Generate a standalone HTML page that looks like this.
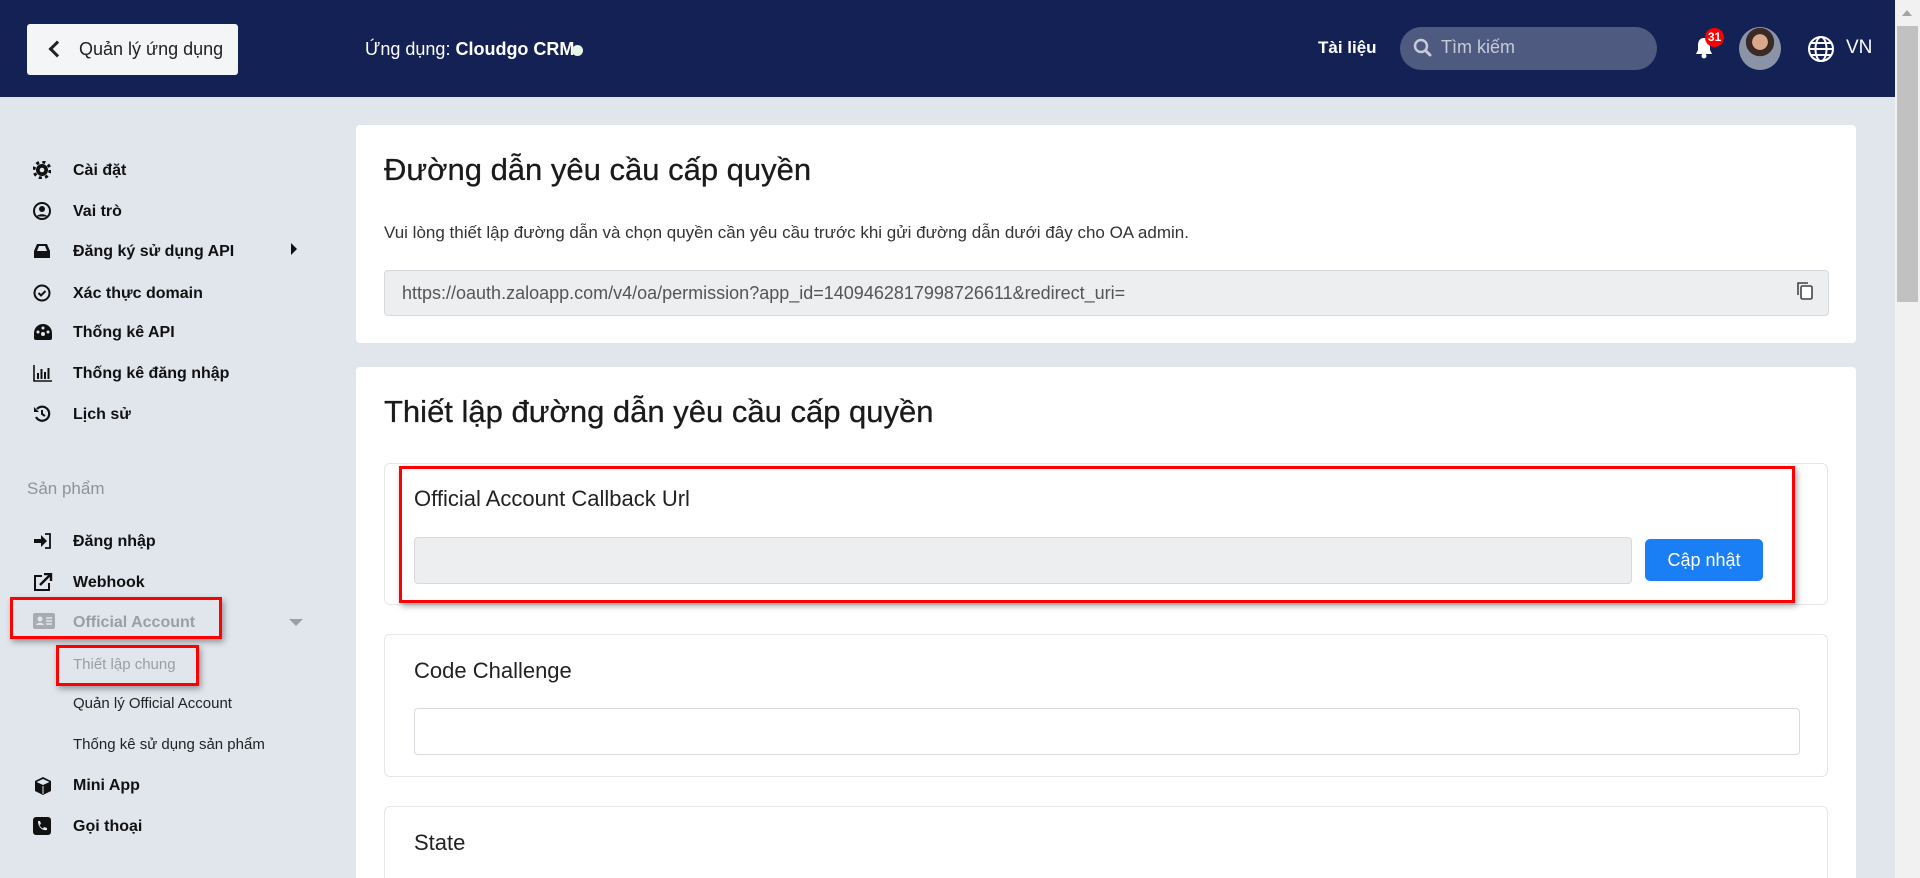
<!DOCTYPE html>
<html style="overflow:hidden;height:878px"><head><meta charset="utf-8"><style>
*{box-sizing:border-box;margin:0;padding:0}
body{width:1920px;height:878px;overflow:hidden;background:#e1e6ed;font-family:"Liberation Sans",Arial,sans-serif;color:#1a1a1a}
#w{position:relative;width:1920px;height:878px;overflow:hidden}
.abs{position:absolute}
.hdr{left:0;top:0;width:1895px;height:97px;background:#132155}
.back{left:27px;top:24px;width:211px;height:51px;background:#f4f5f7;border-radius:3px;font-size:18px;color:#222;line-height:51px;padding-left:52px}
.back:before{content:"";position:absolute;left:24px;top:19px;width:9px;height:9px;border-left:3px solid #222;border-bottom:3px solid #222;transform:rotate(45deg)}
.wt{color:#fff;font-size:17px}
.nav{left:33px;font-size:16px;font-weight:bold;color:#111}
.nav i{position:absolute;left:0;top:0;width:18px;height:18px;display:block}
.nav span{position:absolute;left:40px;top:1px;white-space:nowrap}
.sub{left:73px;font-size:15px;color:#222;white-space:nowrap}
.card{background:#fff;border-radius:4px;left:356px;width:1500px}
.box{left:384px;width:1444px;border:1px solid #e4e7eb;border-radius:6px;background:#fff}
.lbl{font-size:22px;color:#222;position:absolute;left:29px}
.red{border:3px solid #f00;box-shadow:2px 3px 6px rgba(0,0,0,.35)}
.ttl{font-size:31px;color:#1a1a1a;-webkit-text-stroke:0.3px #1a1a1a}
</style></head><body><div id="w">
<div class="abs hdr"></div>
<div class="abs back">Quản lý ứng dụng</div>
<div class="abs wt" style="left:365px;top:39px;font-size:18px">Ứng dụng: <b>Cloudgo CRM</b></div>
<div class="abs" style="left:572px;top:45px;width:11px;height:11px;border-radius:50%;background:#e8f4e8"></div>
<div class="abs wt" style="left:1318px;top:38px;font-weight:bold;font-size:17px">Tài liệu</div>
<div class="abs" style="left:1400px;top:27px;width:257px;height:43px;border-radius:22px;background:#4e5a80"></div>
<svg class="abs" style="left:1413px;top:38px" width="20" height="20" viewBox="0 0 20 20"><circle cx="8" cy="8" r="6" fill="none" stroke="#c7cbd8" stroke-width="2.5"/><path d="M12.5 12.5 L17 17" stroke="#c7cbd8" stroke-width="3" stroke-linecap="round"/></svg>
<div class="abs" style="left:1441px;top:37px;font-size:18px;color:#c7cbd8">Tìm kiếm</div>
<svg class="abs" style="left:1694px;top:36px" width="20" height="24" viewBox="0 0 20 24"><path d="M10 2c-4 0-6 3-6 7v5l-2 4h16l-2-4V9c0-4-2-7-6-7z" fill="#fff"/><circle cx="10" cy="20" r="2.5" fill="#fff"/></svg>
<div class="abs" style="left:1705px;top:28px;width:19px;height:19px;border-radius:50%;background:#f00;color:#fff;font-size:12px;font-weight:bold;text-align:center;line-height:19px">31</div>
<div class="abs" style="left:1739px;top:27px;width:42px;height:43px;border-radius:50%;background:radial-gradient(circle at 50% 35%,#d9a88c 0 22%,#3a2a25 23% 40%,#8a93a8 41%)"></div>
<svg class="abs" style="left:1807px;top:35px" width="28" height="28" viewBox="0 0 28 28" fill="none" stroke="#fff" stroke-width="2"><circle cx="14" cy="14" r="12"/><ellipse cx="14" cy="14" rx="5.5" ry="12"/><path d="M2 14h24M4 8h20M4 20h20"/></svg>
<div class="abs wt" style="left:1846px;top:37px;font-size:19px">VN</div>
<div class="abs" style="left:1895px;top:0;width:25px;height:878px;background:#f1f1f1"></div>
<div class="abs" style="left:1897px;top:26px;width:21px;height:276px;background:#c1c1c1"></div>
<div class="abs" style="left:1902px;top:10px;width:0;height:0;border-left:5px solid transparent;border-right:5px solid transparent;border-bottom:6px solid #a3a3a3"></div>

<div class="abs nav" style="top:161px"><i><svg width="18" height="18" viewBox="0 0 18 18"><circle cx="9" cy="9" r="6" fill="#111"/><circle cx="9" cy="9" r="8" fill="none" stroke="#111" stroke-width="3" stroke-dasharray="3 3.3"/><circle cx="9" cy="9" r="2.3" fill="#e1e6ed"/></svg></i><span>Cài đặt</span></div>
<div class="abs nav" style="top:202px"><i><svg width="18" height="18" viewBox="0 0 18 18"><circle cx="9" cy="9" r="8" fill="none" stroke="#111" stroke-width="2"/><circle cx="9" cy="7" r="3" fill="#111"/><path d="M3.5 14.5c2-3 9-3 11 0" fill="#111"/></svg></i><span>Vai trò</span></div>
<div class="abs nav" style="top:242px"><i><svg width="18" height="18" viewBox="0 0 18 18"><path d="M1 9l3-7h10l3 7v7H1z" fill="#111"/><path d="M4 9l2-5h6l2 5z" fill="#e1e6ed"/></svg></i><span>Đăng ký sử dụng API</span></div>
<div class="abs" style="left:291px;top:243px;width:0;height:0;border-top:6px solid transparent;border-bottom:6px solid transparent;border-left:6px solid #111"></div>
<div class="abs nav" style="top:284px"><i><svg width="18" height="18" viewBox="0 0 18 18"><circle cx="9" cy="9" r="7.5" fill="none" stroke="#111" stroke-width="2"/><path d="M5.5 9l2.5 2.5 4.5-4.5" fill="none" stroke="#111" stroke-width="2"/></svg></i><span>Xác thực domain</span></div>
<div class="abs nav" style="top:323px"><i><svg width="20" height="18" viewBox="0 0 20 18"><path d="M10 1a9 9 0 0 0-9 9v5a2 2 0 0 0 2 2h14a2 2 0 0 0 2-2v-5a9 9 0 0 0-9-9z" fill="#111"/><circle cx="10" cy="11" r="2" fill="#e1e6ed"/><circle cx="5" cy="9" r="1.5" fill="#e1e6ed"/><circle cx="15" cy="9" r="1.5" fill="#e1e6ed"/><circle cx="10" cy="5" r="1.5" fill="#e1e6ed"/></svg></i><span>Thống kê API</span></div>
<div class="abs nav" style="top:364px"><i><svg width="20" height="18" viewBox="0 0 20 18"><path d="M1 1v16h18" fill="none" stroke="#111" stroke-width="1.6"/><path d="M5 9v6M8.5 5v10M12 8v7M15.5 4v11" stroke="#111" stroke-width="2"/></svg></i><span>Thống kê đăng nhập</span></div>
<div class="abs nav" style="top:405px"><i><svg width="18" height="18" viewBox="0 0 18 18"><path d="M4 4a7 7 0 1 1-1 8" fill="none" stroke="#111" stroke-width="2.2"/><path d="M1 2v5h5z" fill="#111"/><path d="M9 5v4l3 2" fill="none" stroke="#111" stroke-width="2"/></svg></i><span>Lịch sử</span></div>
<div class="abs" style="left:27px;top:479px;font-size:17px;color:#8d939c">Sản phẩm</div>
<div class="abs nav" style="top:532px"><i><svg width="20" height="18" viewBox="0 0 20 18"><path d="M1 7h7V3l6 6-6 6v-4H1z" fill="#111"/><path d="M12 2h5v14h-5" fill="none" stroke="#111" stroke-width="1.8"/></svg></i><span>Đăng nhập</span></div>
<div class="abs nav" style="top:573px"><i><svg width="20" height="18" viewBox="0 0 20 18"><path d="M9 3H2v14h14v-7" fill="none" stroke="#111" stroke-width="2"/><path d="M7 12l10-10M11 1h7v7" fill="none" stroke="#111" stroke-width="2.4"/></svg></i><span>Webhook</span></div>
<div class="abs red" style="left:10px;top:597px;width:212px;height:42px"></div>
<div class="abs nav" style="top:613px;color:#9a9ea5"><i><svg width="22" height="16" viewBox="0 0 22 16"><rect x="0" y="0" width="22" height="16" rx="2" fill="#a8acb2"/><circle cx="7" cy="6" r="2.5" fill="#e1e6ed"/><path d="M3 12c1-3 7-3 8 0z" fill="#e1e6ed"/><path d="M13 5h6M13 8h6M13 11h6" stroke="#e1e6ed" stroke-width="1.5"/></svg></i><span>Official Account</span></div>
<div class="abs" style="left:289px;top:619px;width:0;height:0;border-left:7px solid transparent;border-right:7px solid transparent;border-top:7px solid #9a9ea5"></div>
<div class="abs red" style="left:56px;top:645px;width:143px;height:41px"></div>
<div class="abs sub" style="top:656px;color:#9a9ea5">Thiết lập chung</div>
<div class="abs sub" style="top:695px">Quản lý Official Account</div>
<div class="abs sub" style="top:736px">Thống kê sử dụng sản phẩm</div>
<div class="abs nav" style="top:776px"><i><svg width="20" height="20" viewBox="0 0 20 20"><path d="M10 1l8 4v10l-8 4-8-4V5z" fill="#111"/><path d="M3.5 6l6.5 3 6.5-3-6.5-3z" fill="#e1e6ed"/><path d="M10 10v8" stroke="#e1e6ed" stroke-width="1"/></svg></i><span>Mini App</span></div>
<div class="abs nav" style="top:817px"><i><svg width="18" height="18" viewBox="0 0 18 18"><rect width="18" height="18" rx="3" fill="#111"/><path d="M5 4l2 0 1 3-1.5 1c1 2 2 3 3.5 3.5L11 10l3 1v2c-5 1-9-3-9-9z" fill="#e1e6ed"/></svg></i><span>Gọi thoại</span></div>

<div class="abs card" style="top:125px;height:218px"></div>
<div class="abs ttl" style="left:384px;top:152px">Đường dẫn yêu cầu cấp quyền</div>
<div class="abs" style="left:384px;top:223px;font-size:17px;color:#333">Vui lòng thiết lập đường dẫn và chọn quyền cần yêu cầu trước khi gửi đường dẫn dưới đây cho OA admin.</div>
<div class="abs" style="left:384px;top:270px;width:1445px;height:46px;background:#eceef0;border:1px solid #d6d9dd;border-radius:4px;font-size:18px;color:#555;padding-left:17px;line-height:44px">https://oauth.zaloapp.com/v4/oa/permission?app_id=1409462817998726611&amp;redirect_uri=</div>
<svg class="abs" style="left:1796px;top:281px" width="18" height="20" viewBox="0 0 18 20" fill="none" stroke="#444" stroke-width="1.6"><rect x="5" y="5" width="11" height="13" rx="1.5" fill="#fff"/><path d="M2 14V2h10"/></svg>

<div class="abs card" style="top:367px;height:511px;border-radius:4px 4px 0 0"></div>
<div class="abs ttl" style="left:384px;top:394px">Thiết lập đường dẫn yêu cầu cấp quyền</div>
<div class="abs box" style="top:463px;height:142px"><div class="lbl" style="top:22px">Official Account Callback Url</div>
<div class="abs" style="left:29px;top:73px;width:1218px;height:47px;background:#eceef0;border:1px solid #d6d9dd;border-radius:4px"></div>
<div class="abs" style="left:1260px;top:75px;width:118px;height:42px;background:#1a7ef5;border-radius:5px;color:#fff;font-size:18px;text-align:center;line-height:42px">Cập nhật</div></div>
<div class="abs red" style="left:399px;top:466px;width:1396px;height:137px"></div>
<div class="abs box" style="top:634px;height:143px"><div class="lbl" style="top:23px">Code Challenge</div>
<div class="abs" style="left:29px;top:73px;width:1386px;height:47px;background:#fff;border:1px solid #d6d9dd;border-radius:4px"></div></div>
<div class="abs box" style="top:806px;height:72px;border-bottom:none;border-radius:6px 6px 0 0"><div class="lbl" style="top:23px">State</div></div>
</div></body></html>
